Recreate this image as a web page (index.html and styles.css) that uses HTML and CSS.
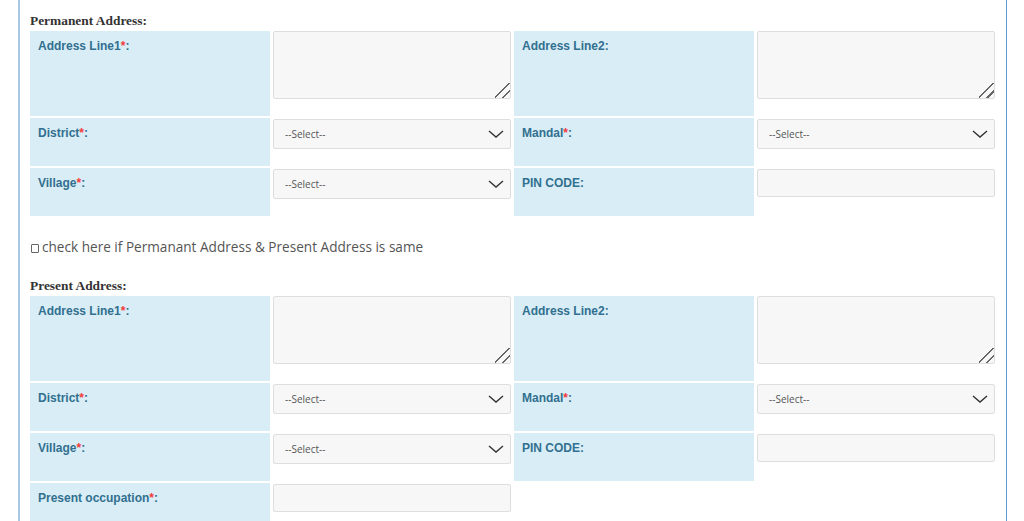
FILE: index.html
```html
<!DOCTYPE html>
<html lang="en">
<head>
    <meta charset="UTF-8">
    <meta name="viewport" content="width=device-width, initial-scale=1.0">
    <title>Address Details</title>
    <link rel="stylesheet" href="styles.css">
</head>
<body>
    <div class="panel">
        <h4 class="section-title">Permanent Address:</h4>
        <table class="form-table">
            <tr>
                <td class="info">Address Line1<span class="req">*</span>:</td>
                <td class="field"><textarea></textarea></td>
                <td class="info">Address Line2:</td>
                <td class="field"><textarea></textarea></td>
            </tr>
            <tr>
                <td class="info">District<span class="req">*</span>:</td>
                <td class="field">
                    <div class="select-box">
                        <select><option>--Select--</option></select>
                        <svg class="chevron" width="16" height="8" viewBox="0 0 16 8"><path d="M1 1 L8 7 L15 1"/></svg>
                    </div>
                </td>
                <td class="info">Mandal<span class="req">*</span>:</td>
                <td class="field">
                    <div class="select-box">
                        <select><option>--Select--</option></select>
                        <svg class="chevron" width="16" height="8" viewBox="0 0 16 8"><path d="M1 1 L8 7 L15 1"/></svg>
                    </div>
                </td>
            </tr>
            <tr>
                <td class="info">Village<span class="req">*</span>:</td>
                <td class="field">
                    <div class="select-box">
                        <select><option>--Select--</option></select>
                        <svg class="chevron" width="16" height="8" viewBox="0 0 16 8"><path d="M1 1 L8 7 L15 1"/></svg>
                    </div>
                </td>
                <td class="info">PIN CODE:</td>
                <td class="field"><input type="text" class="text-input"></td>
            </tr>
        </table>

        <p class="same-line"><input type="checkbox" class="tick">check here if Permanant Address &amp; Present Address is same</p>

        <h4 class="section-title">Present Address:</h4>
        <table class="form-table">
            <tr>
                <td class="info">Address Line1<span class="req">*</span>:</td>
                <td class="field"><textarea></textarea></td>
                <td class="info">Address Line2:</td>
                <td class="field"><textarea></textarea></td>
            </tr>
            <tr>
                <td class="info">District<span class="req">*</span>:</td>
                <td class="field">
                    <div class="select-box">
                        <select><option>--Select--</option></select>
                        <svg class="chevron" width="16" height="8" viewBox="0 0 16 8"><path d="M1 1 L8 7 L15 1"/></svg>
                    </div>
                </td>
                <td class="info">Mandal<span class="req">*</span>:</td>
                <td class="field">
                    <div class="select-box">
                        <select><option>--Select--</option></select>
                        <svg class="chevron" width="16" height="8" viewBox="0 0 16 8"><path d="M1 1 L8 7 L15 1"/></svg>
                    </div>
                </td>
            </tr>
            <tr>
                <td class="info">Village<span class="req">*</span>:</td>
                <td class="field">
                    <div class="select-box">
                        <select><option>--Select--</option></select>
                        <svg class="chevron" width="16" height="8" viewBox="0 0 16 8"><path d="M1 1 L8 7 L15 1"/></svg>
                    </div>
                </td>
                <td class="info">PIN CODE:</td>
                <td class="field"><input type="text" class="text-input"></td>
            </tr>
            <tr>
                <td class="info">Present occupation<span class="req">*</span>:</td>
                <td class="field"><input type="text" class="text-input"></td>
                <td></td>
                <td></td>
            </tr>
        </table>
    </div>
</body>
</html>
```

FILE: styles.css
```css
body {
    margin: 0;
    font-family: "Open Sans", sans-serif;
    color: #555;
    background-color: #fff;
}
.panel {
    box-sizing: border-box;
    width: 989px;
    height: 100vh;
    overflow: hidden;
    margin-left: 18px;
    padding: 13px 8px 0 10px;
    border-left: 2px solid #a6c8e4;
    border-right: 1px solid #5b9bd5;
}
.section-title {
    margin: 0;
    font-family: "Liberation Serif", serif;
    font-size: 13.4px;
    line-height: 16px;
    font-weight: bold;
    color: #333;
}
.form-table {
    width: calc(100% + 2px);
    margin-left: -2px;
    border-spacing: 2px;
    table-layout: fixed;
}
.form-table td {
    box-sizing: border-box;
    width: 25%;
    vertical-align: top;
}
.info {
    padding: 8px;
    background-color: #d9edf7;
    color: #31708f;
    font-family: "Liberation Sans", Arial, sans-serif;
    font-size: 12px;
    line-height: 15px;
    font-weight: bold;
}
.req {
    color: #f23b3b;
}
.field {
    padding: 0 1px;
}
textarea {
    display: block;
    box-sizing: border-box;
    width: 100%;
    height: 68px;
    margin: 0 0 17px;
    border: 1px solid #dedede;
    border-radius: 2px;
    background-color: #f7f7f7;
}
textarea::-webkit-resizer {
    background: linear-gradient(135deg, transparent 45%, #666 45%, #666 53%, transparent 53%, transparent 72%, #666 72%, #666 80%, transparent 80%);
}
.select-box {
    position: relative;
    margin: 1px 0 17px;
}
select {
    display: block;
    box-sizing: border-box;
    width: 100%;
    height: 30px;
    padding: 0 30px 0 11px;
    border: 1px solid #dedede;
    border-radius: 2px;
    background-color: #f7f7f7;
    font-family: "Open Sans", sans-serif;
    font-size: 10px;
    color: #555;
    appearance: none;
    -webkit-appearance: none;
}
.chevron {
    position: absolute;
    right: 7px;
    top: 11px;
    width: 16px;
    height: 8px;
    pointer-events: none;
}
.chevron path {
    fill: none;
    stroke: #333;
    stroke-width: 1.4;
}
.text-input {
    display: block;
    box-sizing: border-box;
    width: 100%;
    height: 28px;
    margin: 1px 0 17px;
    border: 1px solid #dedede;
    border-radius: 2px;
    background-color: #f7f7f7;
}
.same-line {
    margin: 19px 0 21px;
    font-size: 13.6px;
    line-height: 20px;
    color: #555;
}
.tick {
    appearance: none;
    -webkit-appearance: none;
    display: inline-block;
    box-sizing: border-box;
    width: 8px;
    height: 9px;
    margin: 0 3px 0 1px;
    border: 1px solid #666;
    border-radius: 1px;
    vertical-align: -1px;
}
```
